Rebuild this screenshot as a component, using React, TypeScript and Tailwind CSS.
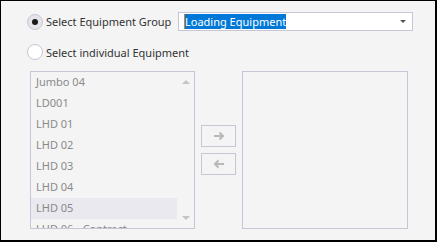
import React from "react";

const items = ["Jumbo 04", "LD001", "LHD 01", "LHD 02", "LHD 03", "LHD 04", "LHD 05", "LHD 06 - Contract"];

function Radio({ checked }: { checked: boolean }) {
  return (
    <div
      className={
        "w-[16px] h-[16px] rounded-full border border-[#c6c6d6] flex items-center justify-center shrink-0 " +
        (checked ? "bg-[#e4e4ea]" : "bg-white")
      }
    >
      {checked && <div className="w-[6px] h-[6px] rounded-full bg-[#1a1a1a]" />}
    </div>
  );
}

export default function App() {
  return (
    <div
      className="w-[437px] h-[242px] border-l border-t border-r-2 border-b-2 border-black bg-[#f4f4f4] overflow-hidden text-[#333333] text-[11px]"
      style={{ fontFamily: '"Noto Sans", sans-serif' }}
    >
      <div className="pl-[26px] pt-[11px]">
        <div className="flex items-center h-[19px]">
          <div className="w-[151px] flex items-center gap-[3px] whitespace-nowrap">
            <Radio checked />
            <span className="leading-none">Select Equipment Group</span>
          </div>
          <div className="w-[235px] h-[19px] border border-[#c6c6d6] bg-white flex items-center pl-[5px] pr-[6px]">
            <span className="bg-[#0078d7] text-white leading-[15px] h-[15px] border-l border-[#e07a1f] whitespace-nowrap">Loading Equipment</span>
            <div className="ml-auto w-0 h-0 border-l-[3px] border-r-[3px] border-t-[3px] border-l-transparent border-r-transparent border-t-[#555]" />
          </div>
        </div>
        <div className="flex items-center h-[16px] mt-[13px] gap-[3px] whitespace-nowrap">
          <Radio checked={false} />
          <span className="leading-none">Select individual Equipment</span>
        </div>
        <div className="flex mt-[11px] ml-[3px] gap-[6px]">
          <div className="w-[165px] h-[158px] border border-[#c6c6d6] flex overflow-hidden">
            <div className="flex-1 flex flex-col">
              {items.map((it, i) => (
                <div
                  key={it}
                  className={
                    "h-[21px] shrink-0 flex items-center pl-[5px] text-[#8a8a8a] whitespace-nowrap " + (i === 6 ? "bg-[#e9e9ef]" : "")
                  }
                >
                  {it}
                </div>
              ))}
            </div>
            <div className="w-[17px] flex flex-col items-center justify-between pt-[8px] pb-[8px]">
              <div className="w-0 h-0 border-l-[4px] border-r-[4px] border-b-[4px] border-l-transparent border-r-transparent border-b-[#c4c4c4]" />
              <div className="w-0 h-0 border-l-[4px] border-r-[4px] border-t-[4px] border-l-transparent border-r-transparent border-t-[#c4c4c4]" />
            </div>
          </div>
          <div className="w-[35px] h-[158px] flex flex-col justify-center gap-[6px]">
            <div className="h-[22px] border border-[#c6c6d6] flex items-center justify-center">
              <svg width="12" height="10" viewBox="0 0 12 10">
                <path d="M1 5H10M6.5 1.5L10 5L6.5 8.5" stroke="#b8b8b8" strokeWidth="2" fill="none" />
              </svg>
            </div>
            <div className="h-[22px] border border-[#c6c6d6] flex items-center justify-center">
              <svg width="12" height="10" viewBox="0 0 12 10">
                <path d="M11 5H2M5.5 1.5L2 5L5.5 8.5" stroke="#b8b8b8" strokeWidth="2" fill="none" />
              </svg>
            </div>
          </div>
          <div className="w-[166px] h-[158px] border border-[#c6c6d6]" />
        </div>
      </div>
    </div>
  );
}
